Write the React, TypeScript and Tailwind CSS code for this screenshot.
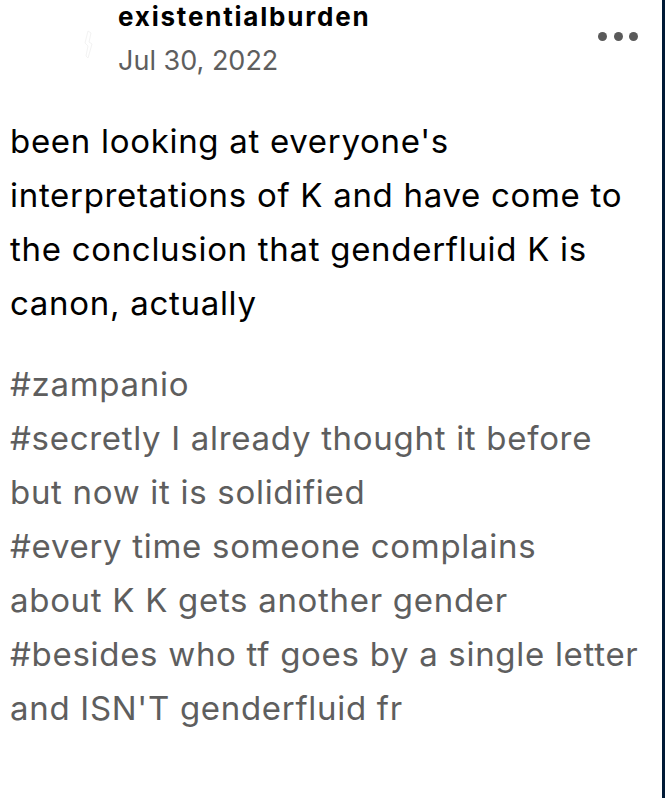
const bodyLines = [
  "been looking at everyone's",
  "interpretations of K and have come to",
  "the conclusion that genderfluid K is",
  "canon, actually",
];

// each tag is an array of its wrapped lines
const tags = [
  ["#zampanio"],
  ["#secretly I already thought it before", "but now it is solidified"],
  ["#every time someone complains", "about K K gets another gender"],
  ["#besides who tf goes by a single letter", "and ISN'T genderfluid fr"],
];

export default function App() {
  return (
    <div className="w-[665px] h-[798px] bg-white flex font-['Inter',sans-serif] overflow-hidden">
      <div className="flex-1 flex flex-col">
        {/* header */}
        <div className="flex items-start pr-[24px]">
          <div className="w-[118px] flex justify-end pr-[24px] pt-[30px]">
            {/* faint avatar remnant */}
            <svg width="10" height="30" viewBox="0 0 10 30" fill="none">
              <path d="M4 1 L7 3 L5 12 L8 14 L4 28 L2 26 L4 16 L1 13 Z" stroke="#f3f3f3" strokeWidth="1" />
            </svg>
          </div>
          <div className="flex-1 flex flex-col">
            <span className="text-[26px] leading-[34px] font-bold tracking-[1.8px] text-black">existentialburden</span>
            <span className="mt-[1px] text-[27px] leading-[52px] text-[#5e5e5e]">Jul 30, 2022</span>
          </div>
          <div className="flex gap-[6.5px] pt-[32px]">
            <span className="w-[9px] h-[9px] rounded-full bg-[#5a5a5a]" />
            <span className="w-[9px] h-[9px] rounded-full bg-[#5a5a5a]" />
            <span className="w-[9px] h-[9px] rounded-full bg-[#5a5a5a]" />
          </div>
        </div>
        {/* body */}
        <div className="mt-[27px] px-[10px] flex flex-col text-[33px] leading-[54px] tracking-[0.7px] text-black whitespace-nowrap">
          {bodyLines.map((l) => (
            <span key={l}>{l}</span>
          ))}
        </div>
        {/* tags */}
        <div className="mt-[27px] px-[10px] flex flex-col text-[33px] leading-[54px] tracking-[0.7px] text-[#5e5e5e] whitespace-nowrap">
          {tags.map((t) => (
            <a key={t[0]} className="flex flex-col">
              {t.map((l) => (
                <span key={l}>{l}</span>
              ))}
            </a>
          ))}
        </div>
      </div>
      <div className="w-[3px] bg-[#001935]" />
    </div>
  );
}
